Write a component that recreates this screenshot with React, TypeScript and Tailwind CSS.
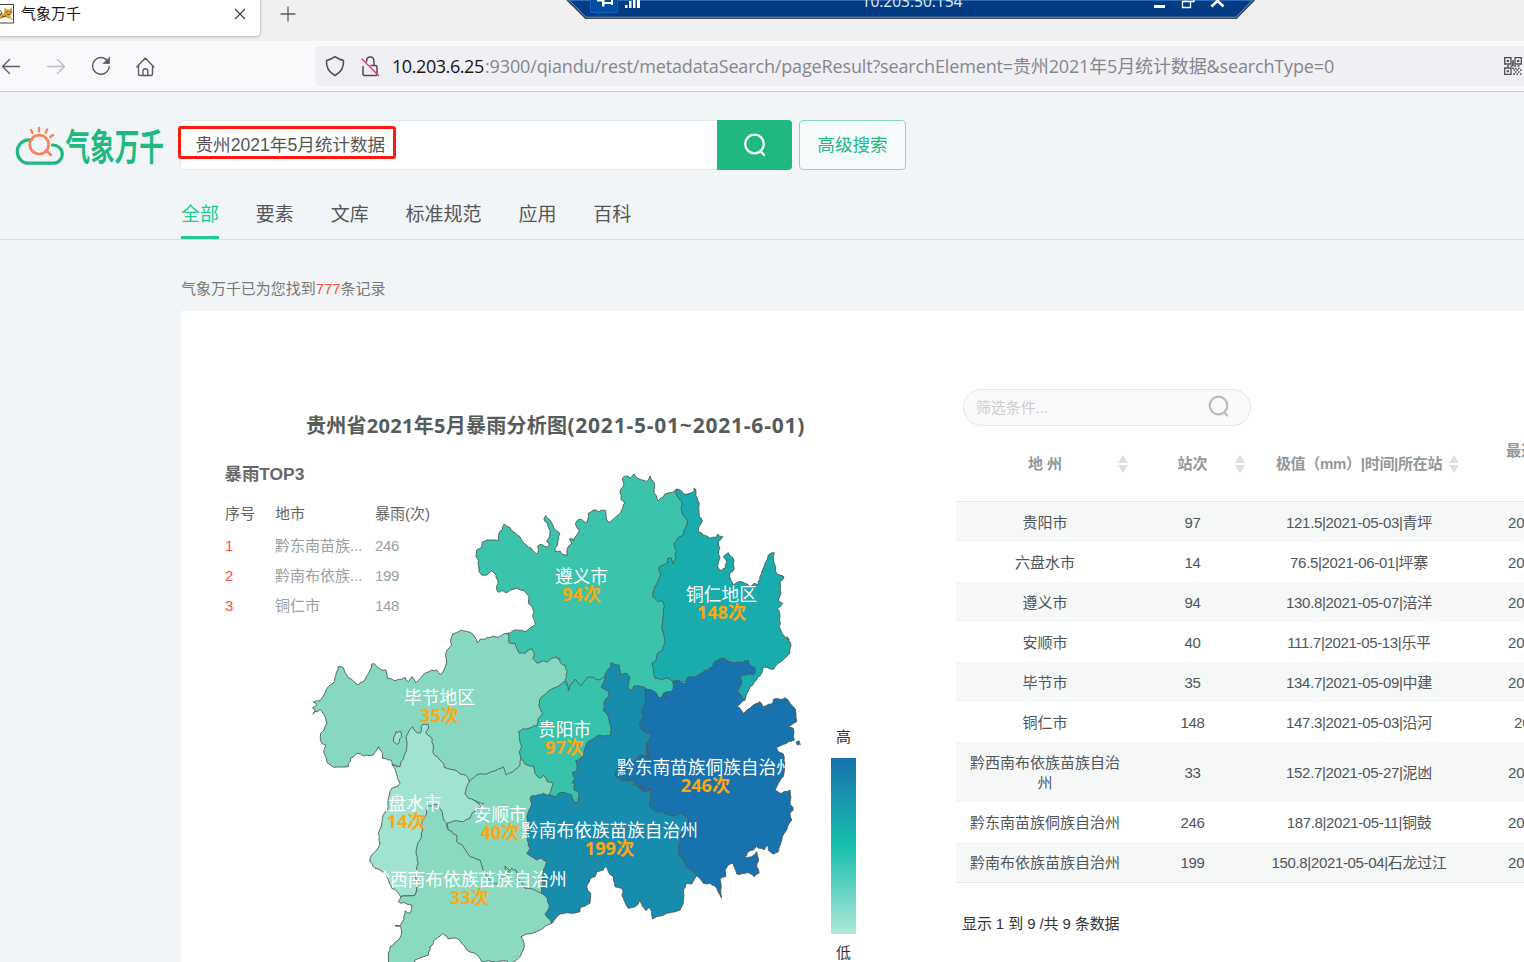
import React from "react";

const arial = "font-['Liberation_Sans','Noto_Sans_CJK_SC',sans-serif]";
const segoe = "font-['Open_Sans','Noto_Sans_CJK_SC',sans-serif]";

type Pt = [number, number];

/* Outline fragments are stored per survey tile, three units to the pixel. */
const TILES: Record<string, Pt> = {
  A: [460, 460],
  B: [630, 460],
  C: [300, 620],
  D: [460, 620],
  E: [630, 630],
  F: [360, 780],
  G: [560, 780],
};

function noise(x: number, y: number) {
  const s = Math.sin(x * 12.9898 + y * 78.233) * 43758.5453;
  return (s - Math.floor(s)) * 2 - 1;
}

function outline(parts: [string, string][]) {
  const pts: Pt[] = [];
  for (const [tile, list] of parts) {
    const [ox, oy] = TILES[tile];
    for (const pair of list.split(" ")) {
      const [x, y] = pair.split(",").map(Number);
      pts.push([ox + x / 3, oy + y / 3]);
    }
  }
  const out: string[] = [];
  pts.forEach((p, i) => {
    const q = pts[(i + 1) % pts.length];
    const dx = q[0] - p[0];
    const dy = q[1] - p[1];
    const len = Math.hypot(dx, dy);
    out.push(`${p[0].toFixed(1)},${p[1].toFixed(1)}`);
    if (len > 3 && len < 26) {
      const n = len > 8 ? 3 : 2;
      for (let k = 1; k < n; k++) {
        const t = k / n;
        const x = p[0] + dx * t;
        const y = p[1] + dy * t;
        const d = noise(Math.round(x), Math.round(y)) * 0.9;
        out.push(`${(x - (dy / len) * d).toFixed(1)},${(y + (dx / len) * d).toFixed(1)}`);
      }
    }
  });
  return `M${out.join("L")}Z`;
}

const REGIONS: { id: string; fill: string; parts: [string, string][] }[] = [
  {
    id: "bijie",
    fill: "#87d8c0",
    parts: [
      ["D", "143,40 120,50 100,48 80,53 75,58 60,58 52,68 45,52 30,37 10,32"],
      ["C", "480,33 458,42 452,60 455,75 437,100 440,120 432,150 422,165 410,150 395,150 370,165 347,188 335,170 325,185 315,172 305,178 285,182 262,175 258,150 240,147 225,133 215,133 210,150 195,180 175,195 155,178 140,165 130,143 115,140 108,165 100,190 85,200 72,225 60,242 40,247 50,256 38,262 45,270 38,282 60,268 75,290 80,310 72,330 62,340 65,370 77,375 72,400 80,425 100,442 145,440 152,415 170,400 190,408 220,405 235,380 245,395 247,415 272,420 277,435 295,440 420,500 510,560"],
      ["D", "180,500 260,400 350,250 350,150 250,90"],
    ],
  },
  {
    id: "zunyi",
    fill: "#3bc4ab",
    parts: [
      ["A", "143,520 165,510 195,515 222,497 225,488 218,470 222,458 215,437 205,430 207,410 192,392 170,385 150,390 137,398 130,393 118,397 110,388 113,360 108,345 95,332 80,345 65,345 57,335 55,300 48,290 50,270 65,262 68,245 80,240 105,240 115,242 117,220 127,210 133,192 150,203 160,215 180,230 190,248 205,262 215,267 230,282 235,272 233,258 245,253 262,262 268,250 260,244 268,232 270,212 262,190 252,180 257,167 270,180 282,205 300,222 293,245 285,275 300,273 313,285 322,288 322,265 335,252 328,238 335,235 340,243 350,225 358,212 347,195 350,183 365,178 372,186 382,186 385,160 400,150 415,155 425,150 437,152 440,180 447,188 460,178 475,165 485,150 495,128 483,118 480,95 490,80 487,55 500,48 510,55"],
      ["B", "12,42 22,55 35,60 50,65 60,48 72,67 73,100 85,123 105,102 128,98 140,87 175,120 200,200 160,350 150,540"],
      ["E", "150,100 140,170 90,210 60,195"],
      ["D", "550,230 480,230 420,230 345,230 325,212 322,195 315,180 322,155 315,135 303,130 300,118 290,110 275,115 262,127 250,122 232,130 218,115 222,98 215,85 203,90 195,100 178,100 165,70 147,68"],
    ],
  },
  {
    id: "tongren",
    fill: "#18acac",
    parts: [
      ["B", "140,87 155,93 165,103 180,100 188,97 192,85 197,88 197,105 208,130 208,170 217,183 207,200 205,215 220,225 240,235 258,232 262,222 278,230 265,245 270,265 265,280 270,295 263,320 275,332 285,325 290,305 280,290 295,278 310,295 313,325 298,345 302,360 310,375 325,365 345,370 360,380 372,370 385,375 390,350 402,320 415,285 433,278 430,300 437,320 440,342 462,350 450,365 453,400 445,420 458,430 442,445 450,470 448,500 460,525 478,540"],
      ["E", "470,20 483,45 480,70 445,100 430,118 400,112 395,130 380,150 360,170 345,210 320,185 280,130 200,160 128,153 120,148 105,145 95,150 75,145 65,100 78,90 82,70 98,60 105,30"],
      ["B", "105,540 95,500 98,475 103,440 100,425 85,425 68,410 75,380 90,350 88,320 105,313 115,308 113,295 122,292 130,312 138,295 135,280 138,270 132,250 145,232 160,225 173,183 155,155 155,125 140,105"],
    ],
  },
  {
    id: "liupanshui",
    fill: "#a1e2d0",
    parts: [
      ["C", "277,435 290,440 300,440 303,425 315,400 320,385 318,350 338,320 348,335 362,338 363,320 372,312 383,312 385,325 377,338 392,350 400,375 400,400 412,410 430,430 433,442 465,450 480,462 495,465 505,475 510,490 495,520 560,570"],
      ["F", "360,130 260,135 235,120 190,200 175,300 170,330 165,345 140,348 122,350 112,335 95,325 85,300 80,285 60,270 45,265 30,245 35,225 50,210 60,190 55,160 65,130 70,105 85,80 85,55 95,25 115,18"],
      ["C", "300,490 288,455"],
    ],
  },
  {
    id: "anshun",
    fill: "#84d8bd",
    parts: [
      ["D", "25,490 50,465 70,462 95,455 115,447 130,440 138,465 160,455 172,445 180,435 183,415 240,415 300,480 290,540 240,600"],
      ["F", "560,120 580,250 560,360 480,330 400,330 330,260 265,160 260,130 290,122 310,125 330,115 340,95 365,80 370,70 345,62 325,55 315,40 318,25"],
    ],
  },
  {
    id: "qianxinan",
    fill: "#8adac1",
    parts: [
      ["F", "235,75 200,77 200,95 195,110 185,130 188,150 180,180 170,205 168,220 175,250 170,270 168,300 170,330 165,345 140,348 122,350 115,365 140,372 155,375 150,400 135,392 132,418 120,437 105,437 122,440 125,455 115,480 90,500 85,520 88,560 165,560 165,540 205,525 210,500 230,475 248,460 265,477 290,475 305,490 320,510 345,520 365,545 385,542 410,546 430,542 455,548 475,535 490,510 492,490 483,470 530,455 575,430 600,380 570,330 545,340 540,338 525,330 510,325 495,325 485,308 470,290 468,270 455,265 450,272 435,258 438,270 452,277 430,290 410,312 395,310 375,280 360,240 330,230 310,200 290,185 290,165 265,150 260,130 250,115 243,90"],
    ],
  },
  {
    id: "guiyang",
    fill: "#36c2ab",
    parts: [
      ["D", "183,415 178,395 185,380 178,350 175,335 190,325 200,327 215,322 230,318 235,295 248,280 240,265 238,250 245,230 260,218 280,205 300,195 315,183 322,195 325,212 330,195 345,178 355,190 362,198 385,170 400,172 415,180 435,168 480,250 480,400 380,560 350,550 268,525 280,490 262,485 250,465 238,475 225,460 220,438 195,432"],
    ],
  },
  {
    id: "qiannan",
    fill: "#178cad",
    parts: [
      ["D", "435,168 440,155 453,142 453,128 478,135 483,165 500,160 510,175 503,200 515,212 522,198 535,197 550,200 640,260 640,420"],
      ["G", "320,50 420,120 400,200 420,270 405,295 395,312 378,310 370,330 370,370 360,390 320,400 278,417 275,395 268,380 258,392 248,380 240,357 235,372 225,380 205,385 190,355 185,325 165,320 160,290 145,275 137,260 130,270 110,275 105,290 90,298 80,320 92,340 90,370 65,380 60,395 0,402"],
      ["F", "575,430 555,402 567,385 562,355 545,340 548,310 550,270 560,245 545,235 530,240 500,220 510,205 502,180 500,150 508,140 502,120 505,95 515,75 512,50"],
      ["D", "225,528 250,520 268,525 290,530 300,518 320,520 335,525 345,550 355,547 355,515 343,510 345,492 335,488 345,475 337,458 350,452 347,422 370,410 372,395 380,370 395,360 415,345 452,347 452,320 445,290 430,272 435,240 447,230 447,215 425,203 430,190"],
    ],
  },
  {
    id: "qiandongnan",
    fill: "#1772ad",
    parts: [
      ["E", "45,178 60,178 75,185 90,205 100,190 122,185 130,175 128,155 145,150 165,160 175,140 200,138 225,120 232,122 250,105 255,95 280,85 300,95 325,97 355,92 360,105 375,113 375,130 350,135 330,140 335,160 322,185 345,210 320,228 340,250 360,235 375,222 390,215 398,230 425,222 430,208 450,208 465,203 480,220 495,235 500,275 475,290 490,295 493,330 470,340 440,352 445,365 460,372 465,400 460,440 445,460 435,480 450,490"],
      ["G", "665,40 690,30 690,65 700,90 690,100 695,120 680,150 665,180 655,215 640,222 625,210 620,195 612,210 600,205 590,198 580,210 570,212 552,232 575,230 590,215 595,235 590,260 597,280 583,290 570,280 555,280 530,282 520,250 505,255 495,270 497,290 480,297 485,355 470,325 450,310 430,310 405,280 380,262 370,235 358,225 355,200 362,180 357,170 370,150 385,125 380,110 365,100 345,107 325,105 310,95 285,95 268,75 275,30 255,35 240,25 218,12"],
      ["D", "560,505 545,512 540,495 515,480 485,482 465,465 475,440 475,425 500,415 520,425 540,405 565,408 560,370"],
      ["E", "60,390 50,370 50,340 65,315 35,300 28,285 40,260 35,240 48,215 45,200"],
    ],
  },
  { id: "enclave", fill: "#a1e2d0", parts: [["C", "288,335 294,338 303,335 305,350 298,365 290,373 280,364 282,350"]] },
  { id: "islet-east", fill: "#1772ad", parts: [["E", "498,337 508,333 512,343 503,346"]] },
  { id: "islet-north", fill: "#1772ad", parts: [["E", "105,199 112,202 108,206"]] },
];

const LABELS = [
  { name: "遵义市", count: 94, x: 581.5, y: 583 },
  { name: "铜仁地区", count: 148, x: 721.5, y: 601 },
  { name: "毕节地区", count: 35, x: 439.5, y: 704 },
  { name: "贵阳市", count: 97, x: 564.5, y: 736 },
  { name: "黔东南苗族侗族自治州", count: 246, x: 705.5, y: 774 },
  { name: "六盘水市", count: 14, x: 406, y: 810 },
  { name: "安顺市", count: 40, x: 500, y: 821 },
  { name: "黔南布依族苗族自治州", count: 199, x: 609.5, y: 837 },
  { name: "黔西南布依族苗族自治州", count: 33, x: 469.5, y: 886 },
];

const ROWS = [
  ["贵阳市", "97", "121.5|2021-05-03|青坪"],
  ["六盘水市", "14", "76.5|2021-06-01|坪寨"],
  ["遵义市", "94", "130.8|2021-05-07|涪洋"],
  ["安顺市", "40", "111.7|2021-05-13|乐平"],
  ["毕节市", "35", "134.7|2021-05-09|中建"],
  ["铜仁市", "148", "147.3|2021-05-03|沿河"],
  ["黔西南布依族苗族自治州", "33", "152.7|2021-05-27|泥凼"],
  ["黔东南苗族侗族自治州", "246", "187.8|2021-05-11|铜鼓"],
  ["黔南布依族苗族自治州", "199", "150.8|2021-05-04|石龙过江"],
];

const TOP3 = [
  ["1", "黔东南苗族...", "246"],
  ["2", "黔南布依族...", "199"],
  ["3", "铜仁市", "148"],
];

function RemoteBar() {
  return (
    <svg className="absolute left-[566px] top-0" width="690" height="20" viewBox="566 0 690 20">
      <path d="M566.5 0 585.5 18.5H1236.500L1255 0Z" fill="#043c84" />
      <path d="M567 0 585.500 18.300H1236.500L1254.500 0" fill="none" stroke="#4a4a4a" strokeWidth="1.2" />
      <path d="M569 0 586 17.200H1236L1252.500 0" fill="none" stroke="#7fa6dd" strokeWidth=".8" />
      <path d="M568 .5H1254" stroke="#2b6cb5" />
      <rect x="590.5" y="-4" width="27" height="16.500" fill="#024da1" stroke="#0a62c4" />
      <path d="M597 0H602V1.500H597ZM602 0H604.500V6.500H602ZM604.500 2H611V4H604.500ZM611 0H613V5H611Z" fill="#fff" />
      <path d="M625 5H627.500V8H625ZM629 1H631.500V8H629ZM633 0H635.500V8H633ZM637 0H640V8H637Z" fill="#fff" />
      <text x="912" y="7" textAnchor="middle" textLength="101" lengthAdjust="spacingAndGlyphs" fill="#e4ecf6" fontSize="16" fontFamily="Open Sans, sans-serif">
        10.203.50.154
      </text>
      <path d="M1154 5H1165V8H1154Z" fill="#fff" />
      <path d="M1182.500 1.500H1190.500V7.500H1182.500ZM1186 0V.5M1191 1.500H1194V0" fill="none" stroke="#fff" strokeWidth="1.300" />
      <path d="M1211.500 6.500 1217.500 .8 1223.500 6.500" fill="none" stroke="#fff" strokeWidth="2.600" />
    </svg>
  );
}

function TabStrip() {
  return (
    <div className="flex h-[41px] bg-[#f0f0f0]">
      <div className="flex h-[37px] w-[261px] rounded-br-[5px] border-b border-r border-[#c9c9cf] bg-white shadow-sm">
        <svg className="mt-[4px]" width="14" height="20" viewBox="0 0 14 20">
          <rect x="-2" y=".5" width="15.500" height="18.500" fill="#fff" stroke="#444" />
          <path d="M0 9 4 10 4.500 3.500 7 5.500H9.500L12 3 12.500 9 10 12 13 16 9 14.500 5 13 0 15Z" fill="#d5a136" />
          <path d="M0 6 2 9 0 11M6 8H7.500M9.500 8H11M7.500 10.500H9.500M2 13 6 12" stroke="#553c16" strokeWidth=".9" fill="none" />
        </svg>
        <div className={`ml-[7px] mt-[3px] w-[206px] text-[15px] leading-[21px] text-[#15141a] ${segoe}`}>气象万千</div>
        <svg className="mt-[8px] ml-[7px]" width="12" height="12" viewBox="0 0 12 12">
          <path d="M1 1 11 11M11 1 1 11" stroke="#3c3b44" strokeWidth="1.100" />
        </svg>
      </div>
      <svg className="ml-[19px] mt-[6px]" width="16" height="16" viewBox="0 0 16 16">
        <path d="M.5 8H15.500M8 .5V15.500" stroke="#5b5b66" strokeWidth="1.300" />
      </svg>
    </div>
  );
}

function NavBar() {
  return (
    <div className="flex h-[51px] items-center border-b border-[#ccccd0] bg-[#f9f9fb]">
      <svg width="315" height="50" viewBox="0 41 315 50" fill="none" stroke="#5b5b66" strokeWidth="1.400" strokeLinecap="round" strokeLinejoin="round">
        <path d="M19.500 66.500H2.500M9.500 59.500 2.500 66.500 9.500 73.500" />
        <path d="M47.500 66.500H64M57.500 59.500 64.500 66.500 57.500 73.500" stroke="#bcbcc2" />
        <path d="M108.500 62.500A8.300 8.300 0 1 0 109.200 66.500" />
        <path d="M109.500 57.500V63.500H103.500Z" fill="#5b5b66" strokeWidth=".8" />
        <path d="M136.800 67 145.300 58 153.800 67M138.500 65.500V74Q138.500 75.500 140 75.500H151Q152.500 75.500 152.500 74V65.500M143 75.500V71Q143 68.800 145.300 68.800T147.800 71V75.500" />
      </svg>
      <div className={`flex h-[40px] flex-1 items-center rounded-l-[5px] bg-[#f0f0f4] text-[18px] ${segoe}`}>
        <svg className="shrink-0" width="77" height="40" viewBox="315 46 77 40" fill="none" stroke="#4c4b55" strokeWidth="1.500" strokeLinecap="round" strokeLinejoin="round">
          <path d="M335 56.700Q338.500 59.300 343.500 60.500Q344.300 70.500 335 75.500Q325.700 70.500 326.500 60.500Q331.500 59.300 335 56.700Z" />
          <path d="M366.500 61.500Q366.500 57 370.300 57T374 61.500V65.500M363 66.500V74Q363 75.500 364.500 75.500H376Q377 75.500 377 74V67Q377 65.500 375.500 65.500H371" />
          <path d="M362 59 378.500 75.500" stroke="#e8416b" />
        </svg>
        <div className="w-[1112px] whitespace-nowrap text-[#85858c]">
          <span className="inline-block w-[93px] tracking-[-0.43px] text-[#15141a]">10.203.6.25</span>
          <span className="tracking-[-0.145px]">:9300/qiandu/rest/metadataSearch/pageResult?searchElement=贵州2021年5月统计数据&amp;searchType=0</span>
        </div>
        <svg width="18" height="18" viewBox="0 0 18 18" fill="none" stroke="#4c4b55" strokeWidth="1.300">
          <path d="M.7 .7H7V7H.7ZM11 .7H17.300V7H11ZM.7 11H7V17.300H.7Z" />
          <path d="M2.800 3.900H5M13 3.900H15.300M2.800 14.200H5" strokeWidth="2" />
          <path d="M8 4H10M9 5V9M3 9H5M6.500 9H8.500M10 9H12M13.500 9H15.500M9 10.500V12M11 11.500H12.500M14 11.500H15.500M9.500 13H11M12.500 13H14M16 13H17.500M11 15H12.500M14 15H15.500M9 17H11M12.500 17H14M16 17H17.500" strokeWidth="1.700" />
        </svg>
      </div>
    </div>
  );
}

function Logo() {
  return (
    <svg className="ml-[15px] block" width="165" height="44" viewBox="15 124 165 44">
      <g fill="none" strokeLinecap="round">
        <path d="M29.500 139.800C22 139.500 17.300 145.500 17.300 151.500C17.300 158 22 163.200 29 163.200H53C58.500 163.200 62.300 159 62.300 154.200C62.300 149 58 144.800 52.500 145" stroke="#1fb980" strokeWidth="3.200" />
        <circle cx="39.200" cy="144.600" r="9.400" stroke="#f9815c" strokeWidth="2.700" />
        <path d="M46 150.500 51 155" stroke="#f9815c" strokeWidth="2.700" />
        <path d="M39 128V131.500M47.200 129.500 45.600 132.500M53 135 50.300 137M31 130 32.500 133" stroke="#f9815c" strokeWidth="2.300" />
      </g>
      <text transform="translate(65.500 160.800) scale(.665 1)" fontSize="37" fontWeight="700" fill="#1fb980" fontFamily="Noto Sans CJK SC, sans-serif">
        气象万千
      </text>
    </svg>
  );
}

function Header() {
  return (
    <div className={`h-[148px] border-b border-[#d6e0e4] ${segoe}`}>
      <div className="flex pt-[28px]">
        <div className="h-[50px] w-[180px] shrink-0 pt-[4px]">
          <Logo />
        </div>
        <div className="relative flex h-[50px] w-[537px] items-center rounded-l-[4px] border border-r-0 border-[#e3e7e8] bg-white">
          <span className={`ml-[14.500px] text-[17.600px] text-[#555] ${arial}`}>贵州2021年5月统计数据</span>
          <div className="absolute left-[-3px] top-[5px] h-[33px] w-[218px] rounded-[3px] border-[3px] border-[#fb1b0e]" />
        </div>
        <div className="flex h-[50px] w-[75px] items-center justify-center rounded-r-[4px] bg-[#1eb880]">
          <svg width="24" height="26" viewBox="0 0 24 26" fill="none" stroke="#fff" strokeWidth="2.300" strokeLinecap="round">
            <circle cx="11.500" cy="12" r="9.300" />
            <path d="M17.500 19 21 23" />
          </svg>
        </div>
        <div className="ml-[7px] flex h-[50px] w-[107px] items-center justify-center rounded-[4px] border border-[#86d9bb] bg-[#f6fafb] pb-[1px] text-[17.6px] text-[#1eb880]">高级搜索</div>
      </div>
      <div className="ml-[181px] mt-[23px] flex gap-[36.850px] text-[19px] leading-[43px] text-[#555]">
        <span className="h-[46px] border-b-[3px] border-[#20cb91] text-[#20cb91]">全部</span>
        <span>要素</span>
        <span>文库</span>
        <span>标准规范</span>
        <span>应用</span>
        <span>百科</span>
      </div>
    </div>
  );
}

function RainMap() {
  return (
    <svg className="absolute left-[119px] top-[149px]" width="530" height="502" viewBox="300 460 530 502">
      <g stroke="#4d5a5a" strokeWidth=".9" strokeLinejoin="round">
        {REGIONS.map((r) => (
          <path key={r.id} d={outline(r.parts)} fill={r.fill} />
        ))}
      </g>
      <g textAnchor="middle" fontSize="17.7" fontFamily="Open Sans, Noto Sans CJK SC, sans-serif">
        {LABELS.map((l) => (
          <React.Fragment key={l.name}>
            <text x={l.x} y={l.y} fill="#fff">
              {l.name}
            </text>
            <text x={l.x} y={l.y + 18} fill="#ffa710" fontSize="18.2" fontWeight="700">
              {l.count}次
            </text>
          </React.Fragment>
        ))}
      </g>
    </svg>
  );
}

function Analysis() {
  return (
    <div className="relative w-[775px] shrink-0">
      <RainMap />
      <h2 className={`ml-[125px] mt-[101px] h-[28px] whitespace-nowrap text-[20px] font-bold leading-[28px] tracking-[0.28px] text-[#555d5b] ${segoe}`}>
        贵州省2021年5月暴雨分析图<span className="text-[21px] leading-none tracking-[0.780px]">(2021-5-01~2021-6-01)</span>
      </h2>
      <div className={`ml-[44px] mt-[20px] w-[240px] text-[15px] ${arial}`}>
        <h3 className="-ml-[0.500px] text-[17.4px] font-bold leading-[28px] text-[#666]">暴雨TOP3</h3>
        <div className="mt-[9px] grid grid-cols-[50px_100px_1fr] leading-[34px] text-[#666]">
          <span>序号</span>
          <span>地市</span>
          <span>暴雨(次)</span>
        </div>
        {TOP3.map(([i, n, c]) => (
          <div key={i} className="grid grid-cols-[50px_100px_1fr] leading-[30px] text-[#999fa3]">
            <span className="text-[#f9503f]">{i}</span>
            <span>{n}</span>
            <span className="tracking-[-0.3px]">{c}</span>
          </div>
        ))}
      </div>
      <div className={`absolute left-[650px] top-[415px] flex w-[25px] flex-col items-center text-[15px] leading-[22px] text-[#333] ${arial}`}>
        <span>高</span>
        <div className="mb-[8px] mt-[10px] h-[176px] w-[25px] bg-[linear-gradient(#1772ad,#17bfae_50%,#aee8d8)]" />
        <span>低</span>
      </div>
    </div>
  );
}

function Sort({ side = "right-[6px]" }: { side?: string }) {
  return (
    <svg className={`absolute top-1/2 -mt-[9px] ${side}`} width="10" height="18" viewBox="0 0 10 18">
      <path d="M5 0 10 8H0ZM0 10H10L5 18Z" fill="#dcdee0" />
    </svg>
  );
}

const cols = "grid grid-cols-[178px_117px_216px_200px]";

function DataTable() {
  return (
    <div className={`w-[711px] shrink-0 pt-[78px] text-[15px] ${arial}`}>
      <div className="ml-[7px] flex h-[37px] w-[288px] items-center justify-between rounded-full border border-[#e6e6e6] bg-[#fafafa] pl-[12px] pr-[20px] text-[#ccc]">
        <span className="mt-[1px] tracking-[-0.1px]">筛选条件...</span>
        <svg className="-mt-[3px]" width="22" height="24" viewBox="0 0 22 24" fill="none" stroke="#bcbcbc" strokeWidth="2.200" strokeLinecap="round">
          <circle cx="10.500" cy="11.500" r="8.800" />
          <path d="M16.500 18.500 19 21.500" />
        </svg>
      </div>
      <div className={`${cols} h-[76px] items-center border-b border-[#e6e8e8] text-center font-bold text-[#92979b]`}>
        <div className="relative leading-[20px]">地 州<Sort /></div>
        <div className="relative leading-[20px]">站次<Sort /></div>
        <div className="relative whitespace-nowrap leading-[20px]">
          <span className="tracking-[-0.3px]">极值（mm）|时间|所在站</span>
          <Sort side="right-[8px]" />
        </div>
        <div className="-mt-[26px] pl-[39px] text-left leading-[20px]">最近</div>
      </div>
      {ROWS.map(([a, b, c], i) => (
        <div key={a} className={`${cols} items-center pb-[9px] pt-[11px] text-center leading-[20px] text-[#4f5559] ${i % 2 ? "bg-white" : "bg-[#f6f8f8]"}`}>
          <div className="px-[10px]">{a}</div>
          <div className="tracking-[-0.3px]">{b}</div>
          <div className="whitespace-nowrap tracking-[-0.33px]">{c}</div>
          <div className={i === 5 ? "pl-[47px] text-left" : "pl-[41px] text-left"}>2021</div>
        </div>
      ))}
      <div className="border-t border-[#e6e8e8] pl-[6px] pt-[30px] leading-[22px] tracking-[-0.1px] text-[#333]">显示 1 到 9 /共 9 条数据</div>
    </div>
  );
}

export default function App() {
  return (
    <div className="relative flex h-[962px] w-[1524px] flex-col overflow-hidden bg-[#f1f5f8]">
      <TabStrip />
      <NavBar />
      <Header />
      <p className={`ml-[181px] mt-[38px] text-[15px] leading-[22px] tracking-[-0.04px] text-[#777] ${arial}`}>
        气象万千已为您找到<span className="text-[#f4503e]">777</span>条记录
      </p>
      <main className="ml-[181px] mt-[11px] flex min-h-0 flex-1 overflow-hidden bg-white">
        <Analysis />
        <DataTable />
      </main>
      <RemoteBar />
    </div>
  );
}
